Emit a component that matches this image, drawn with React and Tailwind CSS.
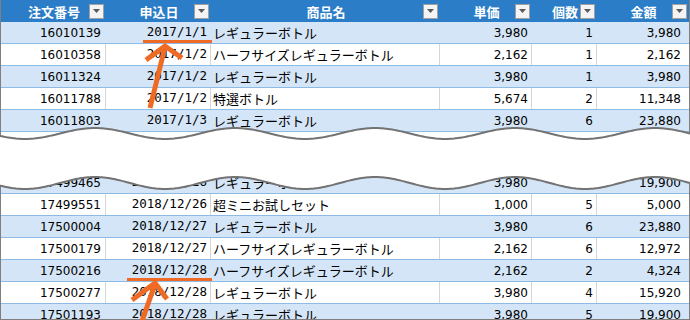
import React from "react";

const COLS = "grid grid-cols-[105px_105px_229px_92px_65px_92px]";
const NUM = { fontFamily: "'DejaVu Sans', 'Noto Sans CJK JP', sans-serif" };

const topRows = [
  ["16010139", "2017/1/1", "レギュラーボトル", "3,980", "1", "3,980"],
  ["16010358", "2017/1/2", "ハーフサイズレギュラーボトル", "2,162", "1", "2,162"],
  ["16011324", "2017/1/2", "レギュラーボトル", "3,980", "1", "3,980"],
  ["16011788", "2017/1/2", "特選ボトル", "5,674", "2", "11,348"],
  ["16011803", "2017/1/3", "レギュラーボトル", "3,980", "6", "23,880"],
];

const bottomRows = [
  ["17499465", "2018/12/26", "レギュラーボトル", "3,980", "5", "19,900"],
  ["17499551", "2018/12/26", "超ミニお試しセット", "1,000", "5", "5,000"],
  ["17500004", "2018/12/27", "レギュラーボトル", "3,980", "6", "23,880"],
  ["17500179", "2018/12/27", "ハーフサイズレギュラーボトル", "2,162", "6", "12,972"],
  ["17500216", "2018/12/28", "ハーフサイズレギュラーボトル", "2,162", "2", "4,324"],
  ["17500277", "2018/12/28", "レギュラーボトル", "3,980", "4", "15,920"],
  ["17501193", "2018/12/28", "レギュラーボトル", "3,980", "5", "19,900"],
];

function FilterBtn() {
  return (
    <div className="w-[15px] h-[15px] shrink-0 bg-[#f4f4f4] border border-[#a0a0a0] flex items-center justify-center">
      <svg width="7" height="4" viewBox="0 0 7 4">
        <polygon points="0,0 7,0 3.5,4" fill="#5a5a5a" />
      </svg>
    </div>
  );
}

function HeadCell({ label }) {
  return (
    <div className="flex items-center h-[22px] pl-[18px] pr-[2px]">
      <span className="flex-1 text-center text-white font-bold text-[13px] leading-none whitespace-nowrap">
        {label}
      </span>
      <FilterBtn />
    </div>
  );
}

function Row({ r, blue }) {
  const line = blue ? "border-transparent" : "border-[#d6d6d6]";
  const cell = `h-[21px] flex items-center border-r ${line}`;
  return (
    <div
      className={`${COLS} h-[22px] border-b border-[#8dbbe6] ${blue ? "bg-[#d3e5f6]" : "bg-white"} text-black`}
    >
      <div className={`${cell} justify-end pr-[4px] text-[12px]`} style={NUM}>{r[0]}</div>
      <div
        className={`${cell} justify-end pr-[3px] text-[12.5px]`}
        style={{ fontFamily: "'DejaVu Sans Mono', monospace" }}
      >
        {r[1]}
      </div>
      <div className={`${cell} justify-start pl-[2px] text-[13px] whitespace-nowrap`}>{r[2]}</div>
      <div className={`${cell} justify-end pr-[3px] text-[12px]`} style={NUM}>{r[3]}</div>
      <div className={`${cell} justify-end pr-[3px] text-[12px]`} style={NUM}>{r[4]}</div>
      <div className={`h-[21px] flex items-center justify-end pr-[8px] text-[12px]`} style={NUM}>{r[5]}</div>
    </div>
  );
}

function wavePts(y0, A, x0, period) {
  const pts = [];
  for (let x = -4; x <= 696; x += 2) {
    const y = y0 + A * Math.cos((2 * Math.PI * (x - x0)) / period);
    pts.push([x, +y.toFixed(2)]);
  }
  return pts;
}

function Overlay() {
  const up = wavePts(133.5, 5.5, 25, 140);
  const lo = wavePts(183, 6, 25, 140);
  const fill =
    "M" +
    up.map((p) => p.join(",")).join(" L") +
    " L" +
    [...lo].reverse().map((p) => p.join(",")).join(" L") +
    " Z";
  const line = (pts) => pts.map((p) => p.join(",")).join(" ");
  const o = "#ef6a24";
  return (
    <svg className="absolute inset-0 pointer-events-none" width="690" height="320" viewBox="0 0 690 320">
      <path d={fill} fill="#ffffff" />
      <polyline points={line(up)} fill="none" stroke="#737373" strokeWidth="2" />
      <polyline points={line(lo)} fill="none" stroke="#737373" strokeWidth="2" />
      <line x1="143" y1="41.5" x2="212" y2="41.5" stroke={o} strokeWidth="3" />
      <line x1="150" y1="108" x2="165" y2="47" stroke={o} strokeWidth="5" />
      <polyline points="146,60 165,46 182,58" fill="none" stroke={o} strokeWidth="5" strokeLinejoin="miter" />
      <line x1="127" y1="279.5" x2="212" y2="279.5" stroke={o} strokeWidth="3" />
      <line x1="141" y1="324" x2="155" y2="284" stroke={o} strokeWidth="5" />
      <polyline points="132,300 155,283 167,299" fill="none" stroke={o} strokeWidth="5" strokeLinejoin="miter" />
    </svg>
  );
}

export default function App() {
  return (
    <div
      className="relative w-[690px] h-[320px] overflow-hidden bg-white"
      style={{ fontFamily: "'Noto Sans CJK JP', 'DejaVu Sans', sans-serif" }}
    >
      <div className="w-[690px] h-[320px] overflow-hidden border-l border-r border-b border-[#7f7f7f]">
        <div className={`${COLS} bg-[#2a7dc6]`}>
          {["注文番号", "申込日", "商品名", "単価", "個数", "金額"].map((h) => (
            <HeadCell key={h} label={h} />
          ))}
        </div>
        {topRows.map((r, i) => (
          <Row key={r[0]} r={r} blue={i % 2 === 0} />
        ))}
        <div className="h-[40px]" />
        {bottomRows.map((r, i) => (
          <Row key={r[0]} r={r} blue={i % 2 === 0} />
        ))}
      </div>
      <Overlay />
    </div>
  );
}
